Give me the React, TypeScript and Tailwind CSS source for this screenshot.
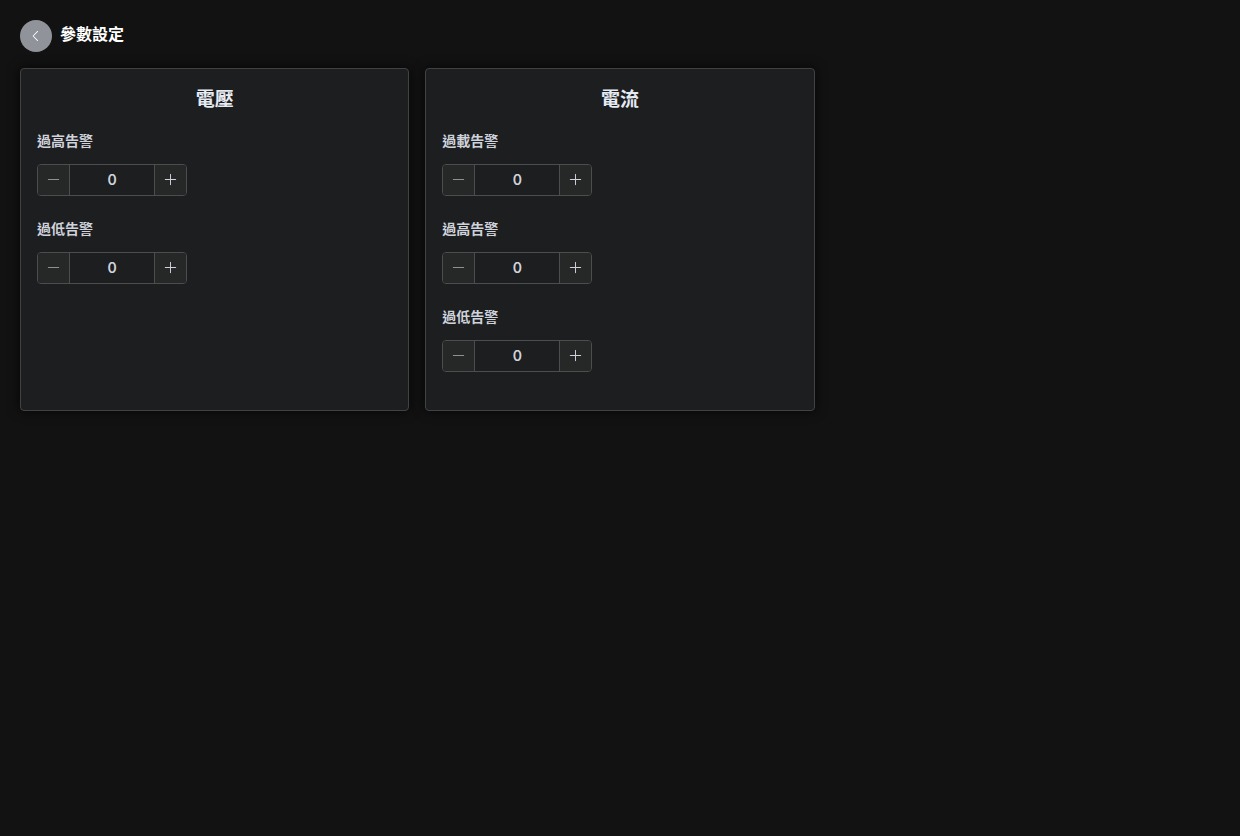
import { useId, useState } from "react";

const groups = [
  { title: "電壓", fields: ["過高告警", "過低告警"] },
  { title: "電流", fields: ["過載告警", "過高告警", "過低告警"] },
];

const iconPaths = {
  back: "M609.408 149.376 277.76 489.6a32 32 0 0 0 0 44.672l331.648 340.352a29.12 29.12 0 0 0 41.728 0 30.592 30.592 0 0 0 0-42.752L339.264 511.936l311.872-319.872a30.592 30.592 0 0 0 0-42.688 29.12 29.12 0 0 0-41.728 0z",
  minus: "M96 550h832a38 38 0 1 0 0-76H96a38 38 0 0 0 0 76z",
  plus: "M474 474V96a38 38 0 0 1 76 0v378h378a38 38 0 1 1 0 76H550v378a38 38 0 1 1-76 0V550H96a38 38 0 0 1 0-76h378z",
};

function Icon({ name, className }: { name: keyof typeof iconPaths; className: string }) {
  return (
    <svg className={className} viewBox="0 0 1024 1024" fill="currentColor" aria-hidden="true">
      <path d={iconPaths[name]} />
    </svg>
  );
}

function NumberField({ label }: { label: string }) {
  const id = useId();
  const [value, setValue] = useState(0);

  return (
    <div className="mb-[22px]">
      <label htmlFor={id} className="mb-3 block text-sm leading-[22px] font-bold text-[#cfd3dc]">
        {label}
      </label>
      <div className="flex h-8 w-[150px] overflow-hidden rounded border border-[#4c4d4f]">
        <button
          type="button"
          aria-label={`${label} 減少`}
          disabled={value <= 0}
          onClick={() => setValue(value - 1)}
          className="flex w-8 shrink-0 items-center justify-center border-r border-[#4c4d4f] bg-[#262727] pb-px text-[#cfd3dc] disabled:text-[#8d9095]"
        >
          <Icon name="minus" className="size-[13px]" />
        </button>
        <input
          id={id}
          type="text"
          inputMode="numeric"
          value={value}
          onChange={(e) => setValue(Number(e.target.value) || 0)}
          className="w-0 min-w-0 grow bg-transparent text-center text-sm font-semibold text-[#cfd3dc] outline-none"
        />
        <button
          type="button"
          aria-label={`${label} 增加`}
          onClick={() => setValue(value + 1)}
          className="flex w-8 shrink-0 items-center justify-center border-l border-[#4c4d4f] bg-[#262727] pb-px text-[#cfd3dc]"
        >
          <Icon name="plus" className="size-[13px]" />
        </button>
      </div>
    </div>
  );
}

export default function App() {
  return (
    <div className="min-h-screen bg-[#121212] p-5 font-[Inter,'Noto_Sans_CJK_TC',sans-serif]">
      <header className="mb-4 flex gap-2">
        <button
          type="button"
          aria-label="返回"
          className="flex size-8 items-center justify-center rounded-full bg-[#909399] text-white"
        >
          <Icon name="back" className="size-3.5" />
        </button>
        <h1 className="text-base leading-7 font-bold text-white">參數設定</h1>
      </header>
      <main className="grid grid-cols-3 gap-4">
        {groups.map((group) => (
          <section
            key={group.title}
            className="rounded border border-[#414243] bg-[#1d1e1f] p-4 shadow-[0_0_12px_rgba(0,0,0,0.72)]"
          >
            <h2 className="mb-[15px] text-center text-[19px] leading-[30px] font-bold text-[#e5eaf3]">
              {group.title}
            </h2>
            {group.fields.map((field) => (
              <NumberField key={field} label={field} />
            ))}
          </section>
        ))}
      </main>
    </div>
  );
}
